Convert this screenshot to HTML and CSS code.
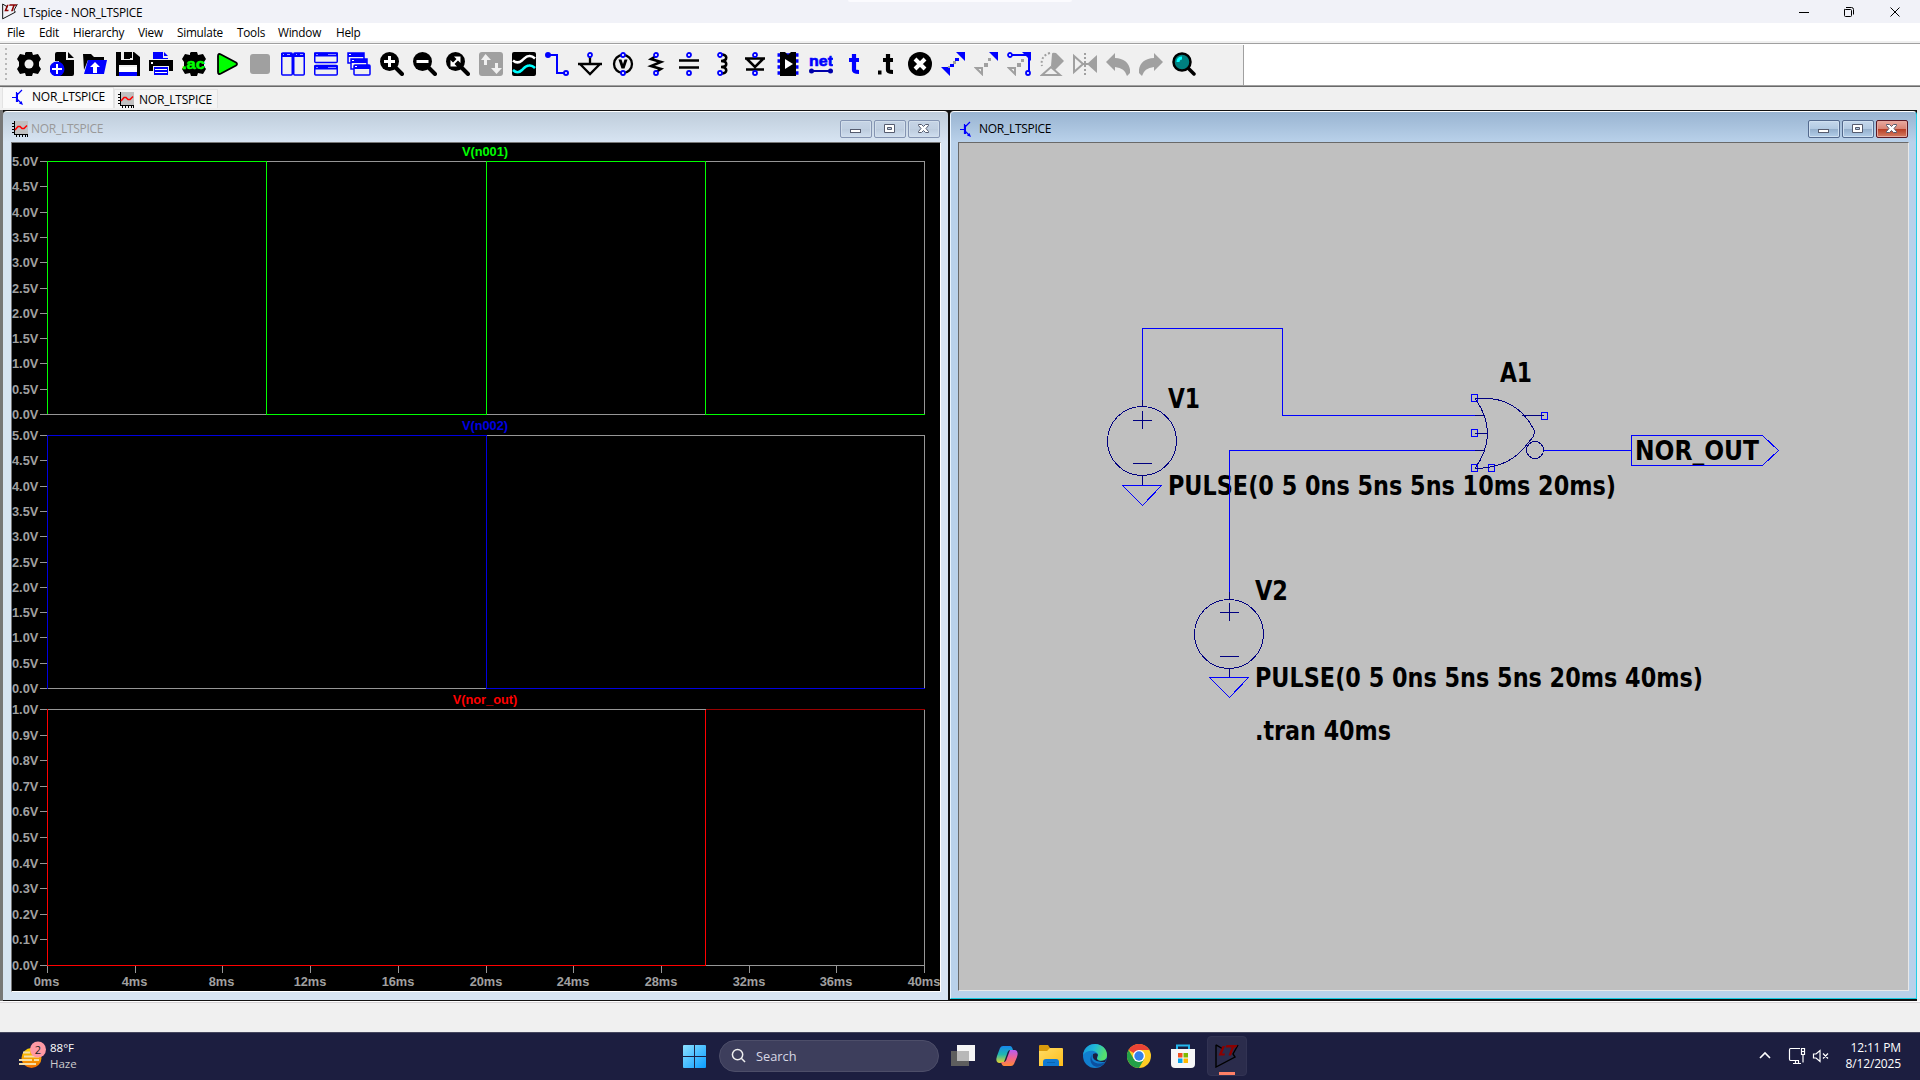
FILE: index.html
```html
<!DOCTYPE html>
<html lang="en">
<head>
<meta charset="utf-8">
<title>LTspice - NOR_LTSPICE</title>
<link rel="stylesheet" href="styles.css">
</head>
<body>
<svg class="defs" aria-hidden="true">
  <defs>
    <symbol id="lt" viewBox="0 0 24 24"><path d="M1 .8L8 5M1 .8V23L20 13L18 10L23 1" fill="none" stroke="#000" stroke-width="1.400"/><path d="M7.500 2H10L7 9.500H10L9.500 11.500H3.500ZM11.500 1H22.500L21 3.500H19L16 11.500H13.500L16.500 3.500H10.500Z" fill="#8b0000"/></symbol>
    <symbol id="npn" viewBox="0 0 16 16"><path d="M1 8.500H5M5.500 3V13M6 6L11 1M6 10L10 14" fill="none" stroke="#00f" stroke-width="1.200"/><path d="M5 4H7V13H5ZM12 16L8 14.500L10.500 12Z" fill="#00f"/></symbol>
    <symbol id="wave" viewBox="0 0 16 16"><path d="M2 0H16V14H2Z" fill="#c0c0c0"/><path d="M2.500 0V14M2 13.500H16M0 2.500H2M0 5.500H2M0 8.500H2M0 11.500H2M4.500 14V16M7.500 14V16M10.500 14V16M13.500 14V16M15.500 14V16" stroke="#000" fill="none"/><path d="M3 9L6 5.500H8L10 7.500H12L15 4.500" fill="none" stroke="#f00" stroke-width="1.500"/></symbol>
    <symbol id="gear" viewBox="0 0 24 24"><path d="M8 1L9 0H15L16 3L21 2L24 7L22 10V14L24 17L21 22L16 21L15 24H9L8 21L3 22L0 17L2 14V10L0 7L3 2L8 3Z"/></symbol>
    <symbol id="lens" viewBox="0 0 24 24"><path d="M15 15L22 22" stroke="#000" stroke-width="4" stroke-linecap="round"/><circle cx="9.500" cy="9.500" r="9.500"/></symbol>
    <linearGradient id="sun" x2="0" y2="1"><stop stop-color="#ffd600"/><stop offset="1" stop-color="#ef6c00"/></linearGradient>
    <linearGradient id="win" x2="1" y2="1"><stop stop-color="#8be0ff"/><stop offset="1" stop-color="#0a9dff"/></linearGradient>
    <linearGradient id="edge" x2="1" y2=".3"><stop stop-color="#1595dc"/><stop offset=".5" stop-color="#20b9d8"/><stop offset="1" stop-color="#55e06c"/></linearGradient>
    <linearGradient id="copA" x2="0" y2="1"><stop stop-color="#1687ed"/><stop offset=".5" stop-color="#20b7b0"/><stop offset="1" stop-color="#e7d52c"/></linearGradient>
    <linearGradient id="copB" x2="0" y2="1"><stop stop-color="#b65cf3"/><stop offset=".5" stop-color="#f06292"/><stop offset="1" stop-color="#ff8a35"/></linearGradient>
    <linearGradient id="folder" x2="1" y2="1"><stop stop-color="#ffdc65"/><stop offset="1" stop-color="#ffbd19"/></linearGradient>
  </defs>
</svg>

<header class="titlebar">
  <svg class="app-icon"><use href="#lt"/></svg>
  <span class="app-title">LTspice - NOR_LTSPICE</span>
  <span class="top-pill"></span>
  <svg class="caption" viewBox="0 0 130 20" fill="none" stroke="#000"><path d="M0 10.500H10M46.500 7.500Q45.500 6.500 45.500 8V13.500Q45.500 14.500 46.500 14.500H51.500Q52.500 14.500 52.500 13.500V8.500Q52.500 7.500 51.500 7.500ZM47 5.500H52.500Q54.500 5.500 54.500 7.500V12.500M91.500 5.500L100.500 14.500M100.500 5.500L91.500 14.500"/></svg>
</header>

<nav class="menu">
  <span class="m-file">File</span><span class="m-edit">Edit</span><span class="m-hier">Hierarchy</span><span class="m-view">View</span><span class="m-sim">Simulate</span><span class="m-tools">Tools</span><span class="m-win">Window</span><span class="m-help">Help</span>
</nav>

<div class="toolrow">
<div class="toolbar">
  <span class="grip"></span>
  <svg viewBox="0 0 24 24"><use href="#gear"/><circle cx="12" cy="12" r="4.500" fill="#f0f0f0"/></svg>
  <svg viewBox="0 0 24 24"><path d="M5 2Q5 0 7 0H16V8H24V22Q24 24 22 24H9V9H5ZM18 0L24 6H18Z"/><circle cx="7" cy="17" r="7.500" fill="#00f"/><path d="M7 12V22M2 17H12" stroke="#fff" stroke-width="2"/></svg>
  <svg viewBox="0 0 24 24"><path d="M0 2H8L11 5H21V8H5L1 18Z"/><path d="M5 8H24L21 22H1Z" fill="#00f"/><path d="M12 10L17 15H14V21H10V15H7Z" fill="#fff"/></svg>
  <svg viewBox="0 0 24 24"><path d="M0 0H18L24 5V24H0Z"/><path d="M5 0H17V8H5ZM3 13H21V24H3Z" fill="#f0f0f0"/><path d="M13 0H16V6H13ZM8 0H14V7H8Z"/><path d="M3 20H21V24H3Z" fill="#00f"/><path d="M3 15H21V20H3Z" fill="#fff"/></svg>
  <svg viewBox="0 0 24 24"><path d="M4 7V0H14V6H19V7ZM15 0L19 4H15Z" fill="#00f"/><path d="M0 8H24V19H0Z"/><path d="M4 14H20V24H4Z" fill="#f0f0f0"/><path d="M5 15H19V23H5Z" fill="#00f"/><path d="M6 17H18V18H6ZM6 20H18V21H6ZM2 10H4V12H2Z" fill="#fff"/></svg>
  <svg viewBox="0 0 24 24"><use href="#gear"/><text class="ac" x="0" y="17" textLength="23" lengthAdjust="spacingAndGlyphs">.ac</text></svg>
  <svg viewBox="0 0 24 24"><path d="M3 4Q3 1 6 2.500L21 10.500Q23 12 21 13.500L6 21.500Q3 23 3 20Z" fill="#0f0" stroke="#000" stroke-width="1.800"/></svg>
  <svg viewBox="0 0 24 24"><rect x="2" y="2" width="20" height="20" rx="3" fill="#a0a0a0"/></svg>
  <svg viewBox="0 0 24 24" fill="none" stroke="#00f"><path d="M0 3H11M13 3H24" stroke-width="4"/><rect x=".750" y="1" width="10.500" height="22" stroke-width="1.500" rx="1"/><rect x="12.750" y="1" width="10.500" height="22" stroke-width="1.500" rx="1"/><path d="M2 2.500H3M15 2.500H16M6 2.500H9M19 2.500H22" stroke="#aaf"/></svg>
  <svg viewBox="0 0 24 24" fill="none" stroke="#00f"><path d="M0 2.500H24M0 15.500H24" stroke-width="4"/><rect x=".750" y="1" width="22.500" height="9.500" stroke-width="1.500" rx="1"/><rect x=".750" y="13.500" width="22.500" height="9.500" stroke-width="1.500" rx="1"/><path d="M2 2.500H4M2 15.500H4M14 2.500H22M14 15.500H22" stroke="#88f"/></svg>
  <svg viewBox="0 0 24 24" fill="#f0f0f0" stroke="#00f" stroke-width="1.500"><rect x="1" y="1" width="16" height="10"/><path d="M1 3H17" stroke-width="4"/><rect x="4" y="7" width="16" height="10"/><path d="M4 9H20" stroke-width="4"/><rect x="7" y="13" width="16" height="10" rx="1"/><path d="M7 15H23" stroke-width="4"/><path d="M2 2.500H4M5 8.500H7M8 14.500H10" stroke="#fff" stroke-width="1"/></svg>
  <svg viewBox="0 0 24 24"><use href="#lens"/><path d="M9.500 4V15M4 9.500H15" stroke="#fff" stroke-width="3"/></svg>
  <svg viewBox="0 0 24 24"><use href="#lens"/><path d="M3.500 9.500H15.500" stroke="#fff" stroke-width="3"/></svg>
  <svg viewBox="0 0 24 24"><use href="#lens"/><path d="M6 13L13 6" stroke="#fff" stroke-width="2"/><path d="M8 4.500H14.500V11ZM4.500 8V14.500H11Z" fill="#fff"/></svg>
  <svg viewBox="0 0 24 24"><rect width="24" height="24" rx="3" fill="#a0a0a0"/><path d="M6.500 2L12 8H8V13H5V8H2ZM17.500 22L12 16H16V11H19V16H23Z" fill="#f0f0f0"/></svg>
  <svg viewBox="0 0 24 24"><rect width="24" height="24" rx="2"/><path d="M1 8.500C4 11 7 11 10 8.500S14 4 17 4Q20 3.500 23 6.500" stroke="#fff" fill="none" stroke-width="2.500"/><path d="M1 18C4 21 7 21 10 18S14 13.500 17 13.500Q20 13 23 16" stroke="#0ff" fill="none" stroke-width="2.500"/></svg>
  <svg viewBox="0 0 24 24" fill="none" stroke="#00f" stroke-width="2"><path d="M3 3H12V21H19"/><circle cx="3" cy="3" r="2" fill="#00f"/><circle cx="21" cy="21" r="2" fill="#fff"/></svg>
  <svg viewBox="0 0 24 24" fill="none" stroke="#000" stroke-width="2.300"><path d="M12 5V12M0 12H24M2 12L12 22L22 12"/><circle class="pin" cx="12" cy="3" r="2"/></svg>
  <svg viewBox="0 0 24 24" fill="none" stroke="#000" stroke-width="2.300"><circle cx="12" cy="12" r="9"/><path d="M7.500 7.500H10.500L12 12L13.500 7.500H16.500L13.500 16.500H10.500Z" fill="#000" stroke="none"/><circle class="pin" cx="12" cy="3" r="2"/><circle class="pin" cx="12" cy="21" r="2"/></svg>
  <svg viewBox="0 0 24 24" fill="none" stroke="#000" stroke-width="2.500"><path d="M12 4L7 7L17 10L7 14L17 17L12 20"/><circle class="pin" cx="12" cy="3" r="2"/><circle class="pin" cx="12" cy="21" r="2"/></svg>
  <svg viewBox="0 0 24 24" fill="none" stroke="#000" stroke-width="2.600"><path d="M2 8.500H22M2 15.500H22"/><circle class="pin" cx="12" cy="3" r="2"/><circle class="pin" cx="12" cy="21" r="2"/></svg>
  <svg viewBox="0 0 24 24" fill="none" stroke="#000" stroke-width="2.600"><path d="M11 2.500C18 2 18 9 11 9C18 9 18 15 11 15C18 15 18 22 11 21.500"/><circle class="pin" cx="10" cy="3" r="2"/><circle class="pin" cx="10" cy="21" r="2"/></svg>
  <svg viewBox="0 0 24 24" fill="none" stroke="#000" stroke-width="2.500"><path d="M2 6.500H22M4 7L12 15L20 7M3 17.500H21"/><circle class="pin" cx="12" cy="3" r="2"/><circle class="pin" cx="12" cy="21" r="2"/></svg>
  <svg viewBox="0 0 24 24"><path d="M1.500 3H22.500M1.500 9H22.500M1.500 15H22.500M1.500 21H22.500" stroke="#00f" stroke-width="3.500"/><path d="M4 0H9L12 3L15 0H20V24H4Z"/><path d="M9 7L17 12L9 17Z" fill="#fff"/></svg>
  <svg viewBox="0 0 24 24"><text class="net" x="0" y="14" textLength="24" lengthAdjust="spacingAndGlyphs">net</text><path d="M3 19H21" stroke="#00a" stroke-width="2"/><circle cx="2.500" cy="19" r="2.500" fill="#00a"/><circle cx="21.500" cy="19" r="2.500" fill="#00a"/></svg>
  <svg viewBox="0 0 24 24" fill="none" stroke="#00f" stroke-width="4.200"><path d="M12 2V18Q12 20 17 20M7 8H17"/></svg>
  <svg viewBox="0 0 24 24" fill="none" stroke="#000" stroke-width="4.200"><path d="M13 2V18Q13 20 18 20M8 8H18M3 20.500H6.500"/></svg>
  <svg viewBox="0 0 24 24"><circle cx="12" cy="12" r="12"/><path d="M7 7L17 17M17 7L7 17" stroke="#fff" stroke-width="4"/></svg>
  <svg viewBox="0 0 24 24"><path d="M15 0H24V9ZM0 15H9V24ZM9 12H13V15H9ZM14 6H18V9H14Z" fill="#00f"/><path d="M12 9H15V12H12ZM7 14H9V16H7Z" fill="#a0a0a0"/></svg>
  <svg viewBox="0 0 24 24"><path d="M15 0H24V9Z" fill="#00f"/><path d="M10 11H14V15H10ZM14 6H17V9H14Z" fill="#a0a0a0"/><path d="M2 16H8V22Z" fill="none" stroke="#a0a0a0" stroke-width="2"/></svg>
  <svg viewBox="0 0 24 24"><path d="M15 0H24V9Z" fill="#00f"/><path d="M10 11H14V15H10ZM14 7H17V10H14Z" fill="#a0a0a0"/><path d="M2 16H8V22Z" fill="none" stroke="#a0a0a0" stroke-width="2"/><path d="M3 3H22V20" fill="none" stroke="#00f" stroke-width="2"/><circle class="pin" cx="3" cy="3" r="2"/><circle class="pin" cx="21" cy="21" r="2"/></svg>
  <svg viewBox="0 0 24 24"><path d="M12 2Q12 0 16 1L24 9L15 18L11 14Z" fill="#a0a0a0"/><path d="M10 1Q0 4 2 14" fill="none" stroke="#a0a0a0" stroke-width="2" stroke-dasharray="2 2"/><path d="M2 23L11 15L20 23Z" fill="#f0f0f0" stroke="#a0a0a0" stroke-width="2"/></svg>
  <svg viewBox="0 0 24 24"><path d="M24 3V21L14 12Z" fill="#a0a0a0"/><path d="M1 4V20L10 12ZM9 12H15" fill="none" stroke="#a0a0a0" stroke-width="2"/><path d="M12 1V24" stroke="#a0a0a0" stroke-width="2" stroke-dasharray="2 2"/></svg>
  <svg viewBox="0 0 24 24"><path id="undo" d="M9 1V6C19 6 25 13 24 21L21 24Q19 16 9 15V19L0 10Z" fill="#a0a0a0"/></svg>
  <svg viewBox="0 0 24 24"><use href="#undo" transform="matrix(-1 0 0 1 24 0)"/></svg>
  <svg viewBox="0 0 24 24"><path d="M15 15L22 22" stroke="#000" stroke-width="3.500" stroke-linecap="round"/><circle cx="10" cy="10" r="8.500" fill="#008080" stroke="#000" stroke-width="2.500"/><path d="M6 10Q6 6 10 6" fill="none" stroke="#0ff" stroke-width="3"/></svg>
</div>
</div>

<div class="tabs">
  <div class="tab active"><svg><use href="#npn"/></svg><span>NOR_LTSPICE</span></div>
  <div class="tab"><svg><use href="#wave"/></svg><span>NOR_LTSPICE</span></div>
</div>

<main class="mdi">
  <section class="window plot-window">
    <div class="window-title">
      <svg><use href="#wave"/></svg><span>NOR_LTSPICE</span>
      <div class="buttons">
        <i><svg viewBox="0 0 30 16"><rect class="glyph" x="9.500" y="8.500" width="10" height="3"/></svg></i>
        <i><svg viewBox="0 0 30 16"><path class="glyph" fill-rule="evenodd" d="M9.500 3.500H19.500V11.500H9.500ZM12.500 6.500V8.500H16.500V6.500Z"/></svg></i>
        <i><svg viewBox="0 0 30 16"><path class="glyph" d="M9.500 3.500H12.500L14.500 5.500L16.500 3.500H19.500V4.500L17 7.500L19.500 10.500V11.500H16.500L14.500 9.500L12.500 11.500H9.500V10.500L12 7.500L9.500 4.500Z"/></svg></i>
      </div>
    </div>
    <svg class="plot" viewBox="12 143 928 848" shape-rendering="crispEdges">
      <g class="axis">
        <rect x="47.500" y="161.500" width="877" height="253"/>
        <rect x="47.500" y="435.500" width="877" height="253"/>
        <rect x="47.500" y="709.500" width="877" height="256"/>
        <path d="M40 161.500H47M40 186.500H47M40 212.500H47M40 237.500H47M40 262.500H47M40 288.500H47M40 313.500H47M40 338.500H47M40 363.500H47M40 389.500H47M40 414.500H47"/>
        <path d="M40 435.500H47M40 460.500H47M40 486.500H47M40 511.500H47M40 536.500H47M40 562.500H47M40 587.500H47M40 612.500H47M40 637.500H47M40 663.500H47M40 688.500H47"/>
        <path d="M40 709.500H47M40 735.500H47M40 760.500H47M40 786.500H47M40 811.500H47M40 837.500H47M40 863.500H47M40 888.500H47M40 914.500H47M40 939.500H47M40 965.500H47"/>
        <path d="M47.500 966V973M135.500 966V973M222.500 966V973M310.500 966V973M398.500 966V973M486.500 966V973M573.500 966V973M661.500 966V973M749.500 966V973M836.500 966V973M924.500 966V973"/>
      </g>
      <path class="trace green" d="M47.500 414V161.500H266.500V414.500H486.500V161.500H705.500V414.500H925"/>
      <path class="trace blue" d="M47.500 689V435.500H486.500V688.500H925"/>
      <path class="trace red" d="M47.500 709V965.500H705.500V709.500"/><path class="trace darkred" d="M706 709.500H925"/>
      <g class="ylabels">
        <text x="12" y="166">5.0V</text><text x="12" y="191">4.5V</text><text x="12" y="217">4.0V</text><text x="12" y="242">3.5V</text><text x="12" y="267">3.0V</text><text x="12" y="293">2.5V</text><text x="12" y="318">2.0V</text><text x="12" y="343">1.5V</text><text x="12" y="368">1.0V</text><text x="12" y="394">0.5V</text><text x="12" y="419">0.0V</text>
        <text x="12" y="440">5.0V</text><text x="12" y="465">4.5V</text><text x="12" y="491">4.0V</text><text x="12" y="516">3.5V</text><text x="12" y="541">3.0V</text><text x="12" y="567">2.5V</text><text x="12" y="592">2.0V</text><text x="12" y="617">1.5V</text><text x="12" y="642">1.0V</text><text x="12" y="668">0.5V</text><text x="12" y="693">0.0V</text>
        <text x="12" y="714">1.0V</text><text x="12" y="740">0.9V</text><text x="12" y="765">0.8V</text><text x="12" y="791">0.7V</text><text x="12" y="816">0.6V</text><text x="12" y="842">0.5V</text><text x="12" y="868">0.4V</text><text x="12" y="893">0.3V</text><text x="12" y="919">0.2V</text><text x="12" y="944">0.1V</text><text x="12" y="970">0.0V</text>
      </g>
      <g class="xlabels">
        <text x="46.500" y="986">0ms</text><text x="134.500" y="986">4ms</text><text x="221.500" y="986">8ms</text><text x="310" y="986">12ms</text><text x="398" y="986">16ms</text><text x="486" y="986">20ms</text><text x="573" y="986">24ms</text><text x="661" y="986">28ms</text><text x="749" y="986">32ms</text><text x="836" y="986">36ms</text><text x="924" y="986">40ms</text>
        <text class="g" x="485" y="156">V(n001)</text><text class="b" x="485" y="430">V(n002)</text><text class="r" x="485" y="704">V(nor_out)</text>
      </g>
    </svg>
  </section>

  <section class="window schematic-window">
    <div class="window-title">
      <svg><use href="#npn"/></svg><span>NOR_LTSPICE</span>
      <div class="buttons">
        <i><svg viewBox="0 0 30 16"><rect class="glyph" x="9.500" y="8.500" width="10" height="3"/></svg></i>
        <i><svg viewBox="0 0 30 16"><path class="glyph" fill-rule="evenodd" d="M9.500 3.500H19.500V11.500H9.500ZM12.500 6.500V8.500H16.500V6.500Z"/></svg></i>
        <i class="close"><svg viewBox="0 0 30 16"><path class="glyph" d="M9.500 3.500H12.500L14.500 5.500L16.500 3.500H19.500V4.500L17 7.500L19.500 10.500V11.500H16.500L14.500 9.500L12.500 11.500H9.500V10.500L12 7.500L9.500 4.500Z"/></svg></i>
      </div>
    </div>
    <svg class="schematic" viewBox="959 143 949 847">
      <g class="labels">
        <text x="1168" y="408" textLength="32" lengthAdjust="spacingAndGlyphs">V1</text>
        <text x="1168" y="495" textLength="448" lengthAdjust="spacingAndGlyphs">PULSE(0 5 0ns 5ns 5ns 10ms 20ms)</text>
        <text x="1255" y="600" textLength="33" lengthAdjust="spacingAndGlyphs">V2</text>
        <text x="1255" y="687" textLength="448" lengthAdjust="spacingAndGlyphs">PULSE(0 5 0ns 5ns 5ns 20ms 40ms)</text>
        <text x="1255" y="740" textLength="136" lengthAdjust="spacingAndGlyphs">.tran 40ms</text>
        <text x="1500" y="382" textLength="32" lengthAdjust="spacingAndGlyphs">A1</text>
        <text x="1635" y="460" textLength="124" lengthAdjust="spacingAndGlyphs">NOR_OUT</text>
      </g>
      <g shape-rendering="crispEdges">
        <g class="wire">
          <path d="M1142.500 400V328.500H1282.500V415.500H1475M1475 450.500H1229.500V592M1544 450.500H1631"/>
          <path d="M1122.500 485.500H1161.500L1142.500 505.500ZM1209.500 677.500H1248.500L1229.500 697.500Z"/>
          <path d="M1631.500 435.500H1762.500L1778.500 450.500L1762.500 465.500H1631.500Z"/>
          <path d="M1471.500 394.500H1477.500V401.500H1471.500ZM1471.500 429.500H1477.500V436.500H1471.500ZM1471.500 464.500H1477.500V471.500H1471.500ZM1488.500 464.500H1494.500V471.500H1488.500ZM1541.500 412.500H1547.500V419.500H1541.500Z"/>
        </g>
        <g class="symbol">
          <circle cx="1142" cy="441" r="34.500"/><circle cx="1229" cy="634" r="34.500"/>
          <path d="M1142.500 400V406M1133 420.500H1152M1142.500 411V429M1133 463.500H1152M1142.500 476V485"/>
          <path d="M1229.500 592V599M1220 612.500H1239M1229.500 603V621M1220 656.500H1239M1229.500 669V677"/>
          <path d="M1475 398.500H1488C1511 399 1527 415 1534 430Q1535 433 1533 437L1528 443C1515 461 1498 468 1475 468.500M1475 398.500Q1500 433 1475 468.500M1475 415.500H1484M1475 433.500H1487M1475 450.500H1484M1522 415.500H1544"/>
          <circle cx="1535" cy="450" r="8.500"/>
        </g>
      </g>
    </svg>
  </section>
</main>

<div class="status"></div>

<footer class="taskbar">
  <div class="weather">
    <svg viewBox="0 0 28 28"><circle cx="12.500" cy="17" r="10" fill="url(#sun)"/><path d="M4 11.500H11M5 15.500H20M0 19H13M15 19H20M0 23H17" stroke="#f4dfa6" stroke-width="1.800"/><circle cx="19" cy="8.500" r="8" fill="#ff99a4"/><text class="badge" x="19" y="12.500">2</text></svg>
    <p><b>88°F</b><br>Haze</p>
  </div>
  <div class="apps">
    <svg class="start" viewBox="0 0 24 24" fill="url(#win)"><path d="M0 1Q0 0 1 0H11.500V11.500H0ZM12.500 0H23Q24 0 24 1V11.500H12.500ZM0 12.500H11.500V24H1Q0 24 0 23ZM12.500 12.500H24V23Q24 24 23 24H12.500Z"/></svg>
    <div class="search"><svg viewBox="0 0 16 16" fill="none" stroke="#eee" stroke-width="1.600"><circle cx="7" cy="7" r="5.500"/><path d="M11 11L15 15"/></svg><span>Search</span></div>
    <div class="icons">
      <span><svg viewBox="0 0 24 24"><path d="M0 7H18V22H0Z" fill="#5e5e5e"/><path d="M6 1H24V17H6Z" fill="#f5f5f5"/><path d="M6 7H18V17H6Z" fill="#b8b8b8"/></svg></span>
      <span><svg viewBox="0 0 24 24"><path d="M8 2H15Q17 2 18 6H15Q13 6 12 10L9 18Q8 19 4 19Q0 18 2 12L5 4Q6 2 8 2Z" fill="url(#copA)"/><path d="M16 22H9Q7 22 6 18H9Q11 18 12 14L15 6H20Q24 7 22 13L19 20Q18 22 16 22Z" fill="url(#copB)"/></svg></span>
      <span><svg viewBox="0 0 24 24"><path d="M0 2Q0 1 1 1H9L11 4V8H0Z" fill="#d99a0b"/><path d="M0 7H8L11 4H23Q24 4 24 5V22H0Z" fill="url(#folder)"/><path d="M4 22V18Q4 15 7 15H17Q20 15 20 18V22Z" fill="#1079d3"/><path d="M8 18.500H16" stroke="#0864b2"/></svg></span>
      <span><svg viewBox="0 0 24 24"><circle cx="12" cy="12" r="12" fill="#117fcf"/><path d="M0 11C1 3 7 0 12 0C19 0 24 5 24 11C24 16 19 18 15 16C13 15 15 13 15 11C15 7 5 4 0 11Z" fill="url(#edge)"/><path d="M9 10C6 18 15 22 22 18C16 28 3 21 9 10Z" fill="#0c4f9f"/><path d="M10 10Q8 18 22 18L24 14Q22 17 17 17Q12 16 15 11Q14 8 10 10Z" fill="#1c1f40"/></svg></span>
      <span><svg viewBox="0 0 24 24"><circle cx="12" cy="12" r="12" fill="#ffcd24"/><path d="M12 12L1.600 6A12 12 0 0 1 22.400 6H12Z" fill="#ea4335"/><path d="M12 12L17.200 15L12 24A12 12 0 0 1 1.600 6L6.800 15Z" fill="#23a047"/><circle cx="12" cy="12" r="6" fill="#fff"/><circle cx="12" cy="12" r="4.700" fill="#3380eb"/></svg></span>
      <span><svg viewBox="0 0 24 24"><path d="M6 6V1.500H18V6" fill="none" stroke="#25b7ed" stroke-width="2"/><path d="M0 5H24V20Q24 24 20 24H4Q0 24 0 20Z" fill="#f7f7f7"/><path d="M7 9H11.500V13.500H7Z" fill="#f25022"/><path d="M12.500 9H17V13.500H12.500Z" fill="#7fba00"/><path d="M7 14.500H11.500V19H7Z" fill="#00a4ef"/><path d="M12.500 14.500H17V19H12.500Z" fill="#ffb900"/></svg></span>
      <span class="running"><svg viewBox="0 0 24 24"><use href="#lt"/></svg></span>
    </div>
  </div>
  <div class="tray">
    <svg viewBox="0 0 72 20" fill="none" stroke="#fff" stroke-width="1.200"><path d="M1 12L6 7L11 12" stroke-width="1.600"/><path d="M41 2.500H31.500Q30.500 2.500 30.500 4V13Q30.500 14.500 31.500 14.500H40M34 17.500H42M36.500 15V17M39.500 15V17M42.500 2.500H45.500V8.500H42.500ZM42.500 5.500H45.500M44 9V16.500"/><path d="M54.500 8H57L61 4.500V15.500L57 12H54.500ZM64 7.500L69 12.500M69 7.500L64 12.500"/></svg>
    <p>12:11 PM<br>8/12/2025</p>
  </div>
</footer>
</body>
</html>
```
FILE: styles.css
```css
* { box-sizing: border-box; }
body {
  margin: 0;
  width: 1920px;
  height: 1080px;
  overflow: hidden;
  display: flex;
  flex-direction: column;
  background: #f0f0f0;
  color: #000;
  font: 12px/16px "Open Sans", "Noto Sans", sans-serif;
}
svg { display: block; flex: none; }
p { margin: 0; }
.defs { position: absolute; width: 0; height: 0; }

.titlebar {
  position: relative;
  height: 23px;
  flex: none;
  display: flex;
  align-items: center;
  background: #f1f2f8;
  padding-left: 2px;
}
.app-icon { width: 16px; height: 17px; margin-right: 5px; }
.app-title { font-size: 11.800px; letter-spacing: -.260px; }
.top-pill { position: absolute; left: 848px; top: 0; width: 224px; height: 2px; background: #fbfbfe; border-radius: 0 0 4px 4px; }
.caption { width: 130px; height: 20px; margin-left: auto; margin-right: -9px; }

.menu {
  height: 21px;
  flex: none;
  display: flex;
  background: #fff;
  border-bottom: 1px solid #a0a0a0;
  box-shadow: inset 0 -2px #f0f0f0;
  padding: 1px 0 0 7px;
  letter-spacing: -.250px;
  font-size: 11.800px;
}
.m-file { width: 32px; }
.m-edit { width: 34px; }
.m-hier { width: 65px; }
.m-view { width: 39px; }
.m-sim { width: 60px; }
.m-tools { width: 41px; }
.m-win { width: 58px; }

.toolrow {
  height: 43px;
  flex: none;
  background: #fff;
  border-top: 1px solid #fff;
  border-bottom: 1px solid #696969;
  box-shadow: inset 0 -1px #a0a0a0;
}
.toolbar {
  width: 1244px;
  height: 40px;
  display: flex;
  align-items: center;
  gap: 9px;
  background: #f0f0f0;
  border-right: 1px solid #a0a0a0;
  padding: 0 0 2px 5px;
}
.toolbar svg { width: 24px; height: 24px; }
.grip { width: 2px; height: 32px; margin-right: 1px; background: repeating-linear-gradient(#b8b8b8 0 2px, #f0f0f0 2px 5px); }
.pin { fill: #fff; stroke: #00f; stroke-width: 1.800; }
.ac { font: bold 15px "Liberation Sans", sans-serif; fill: #0f0; stroke: #0f0; stroke-width: .500; }
.net { font: bold 15px "Liberation Sans", sans-serif; fill: #00f; stroke: #00f; stroke-width: .600; }

.tabs {
  height: 23px;
  flex: none;
  display: flex;
  align-items: flex-end;
  padding: 0 0 2px 2px;
}
.tab {
  display: flex;
  align-items: center;
  gap: 5px;
  width: 104px;
  height: 19px;
  padding: 1px 0 0 3px;
  border: 1px solid #e3e3e3;
  border-bottom: 0;
  background: #f4f4f4;
  letter-spacing: -.200px;
}
.tab.active { width: 112px; height: 21px; padding: 0 0 2px 8px; gap: 5px; background: #fafafa; }
.tab svg { width: 16px; height: 16px; }

.mdi {
  height: 891px;
  flex: none;
  display: flex;
  gap: 2px;
  padding: 1px 3px 1px 0;
  background: #111;
  border-left: 3px solid #777;
  box-shadow: inset -3px 0 #f0f0f0;
}
.window { border-top: 1px solid #fff; border-radius: 4px 4px 0 0; }
.plot-window { width: 945px; height: 889px; padding: 0 8px 8px 8px; background: linear-gradient(#bfcddb, #d7e4f2 30px); }
.schematic-window { width: 967px; height: 888px; padding: 0 8px 7px 7px; background: linear-gradient(#99b4d1, #b9d1ea 30px); border-left: 1px solid #e8f4ff; border-right: 1px solid #22cfe8; border-bottom: 1px solid #12c9df; }
.window-title { height: 30px; display: flex; align-items: center; padding: 4px 0 0 1px; color: #999; letter-spacing: -.280px; }
.schematic-window .window-title { color: #000; padding-left: 1px; }
.window-title > svg { width: 16px; height: 16px; margin-right: 3px; }
.schematic-window .window-title > svg { margin-right: 4px; }
.buttons { display: flex; gap: 2px; margin-left: auto; }
.buttons i { width: 32px; height: 18px; border: 1px solid #8494b2; border-radius: 2px; background: linear-gradient(#c6d4e5, #c0cfe1 50%, #bccbdd 51%, #cfdeef); box-shadow: inset 0 0 0 1px #d2deeb; }
.buttons svg { width: 30px; height: 16px; }
.glyph { fill: #fff; stroke: #555b6e; stroke-width: 1; }
.schematic-window i { border-color: #53698d; background: linear-gradient(#c5d8ec, #b1c9e2 50%, #94afcc 51%, #b3cee9); box-shadow: inset 0 0 0 1px #cfe0f1; }
.schematic-window i.close { border-color: #5b1824; background: linear-gradient(#e9aaa0, #d98373 50%, #b83d25 51%, #d47d62); box-shadow: inset 0 0 0 1px #e6a99f; }

.plot { width: 930px; height: 850px; background: #000; border: 1px solid #777; border-color: #777 #fff #fff #777; }
.axis { fill: none; stroke: #969696; }
.trace { fill: none; stroke-width: 1; }
.green { stroke: #0f0; }
.blue { stroke: #0000e1; }
.red { stroke: #f00; }
.darkred { stroke: #900; }
.plot text { font: bold 12.800px "Liberation Sans", Arial, sans-serif; fill: #a0a0a0; }
.xlabels text { text-anchor: middle; }
.plot .g { fill: #0f0; }
.plot .b { fill: #0000e1; }
.plot .r { fill: #f00; }

.schematic { width: 951px; height: 849px; background: #c0c0c0; border: 1px solid #696969; border-color: #696969 #e8e8e8 #e8e8e8 #696969; }
.labels text { font: bold condensed 26px "DejaVu Sans", "DejaVu Sans Condensed", sans-serif; }
.wire { fill: none; stroke: #00f; }
.symbol { fill: none; stroke: #000080; }

.status { height: 31px; flex: none; border-top: 1px solid #fff; box-shadow: inset 0 1px #d8d5d8; background: #f0f0f0; }

.taskbar {
  height: 48px;
  flex: none;
  display: grid;
  grid-template-columns: 683px 1fr auto;
  align-items: center;
  background: #1c1e40;
  border-top: 1px solid #44465e;
  color: #fff;
}
.weather { display: flex; align-items: center; gap: 3px; padding: 0 0 2px 19px; }
.weather svg { width: 28px; height: 28px; margin-top: -1px; }
.weather p { color: #ccc; font-size: 11.500px; }
.weather b { color: #fff; font-weight: 500; }
.badge { font: 11px "Open Sans", sans-serif; text-anchor: middle; fill: #222; }
.apps { display: flex; align-items: center; padding-bottom: 1px; }
.start { width: 23px; height: 23px; }
.search { width: 220px; height: 32px; margin: 0 4px 0 13px; border: 1px solid #4d4e69; border-radius: 16px; background: #3d3e5c; display: flex; align-items: center; gap: 10px; padding: 0 0 1px 11px; font-size: 12.800px; color: #d8d8e4; }
.search svg { width: 15px; height: 15px; }
.icons { display: flex; gap: 4px; }
.icons span { width: 40px; height: 40px; display: grid; place-items: center; border-radius: 4px; }
.icons svg { width: 24px; height: 24px; }
.icons .running { background: #2b2c4c; border: 1px solid #323353; background-image: linear-gradient(#ff8066, #ff8066); background-size: 16px 3px; background-repeat: no-repeat; background-position: 50% 100%; }
.tray { display: flex; align-items: center; gap: 14px; padding: 0 19px 1px 0; }
.tray svg { width: 72px; height: 20px; }
.tray p { text-align: right; font-size: 12px; letter-spacing: -.150px; width: 56px; white-space: nowrap; }
```
